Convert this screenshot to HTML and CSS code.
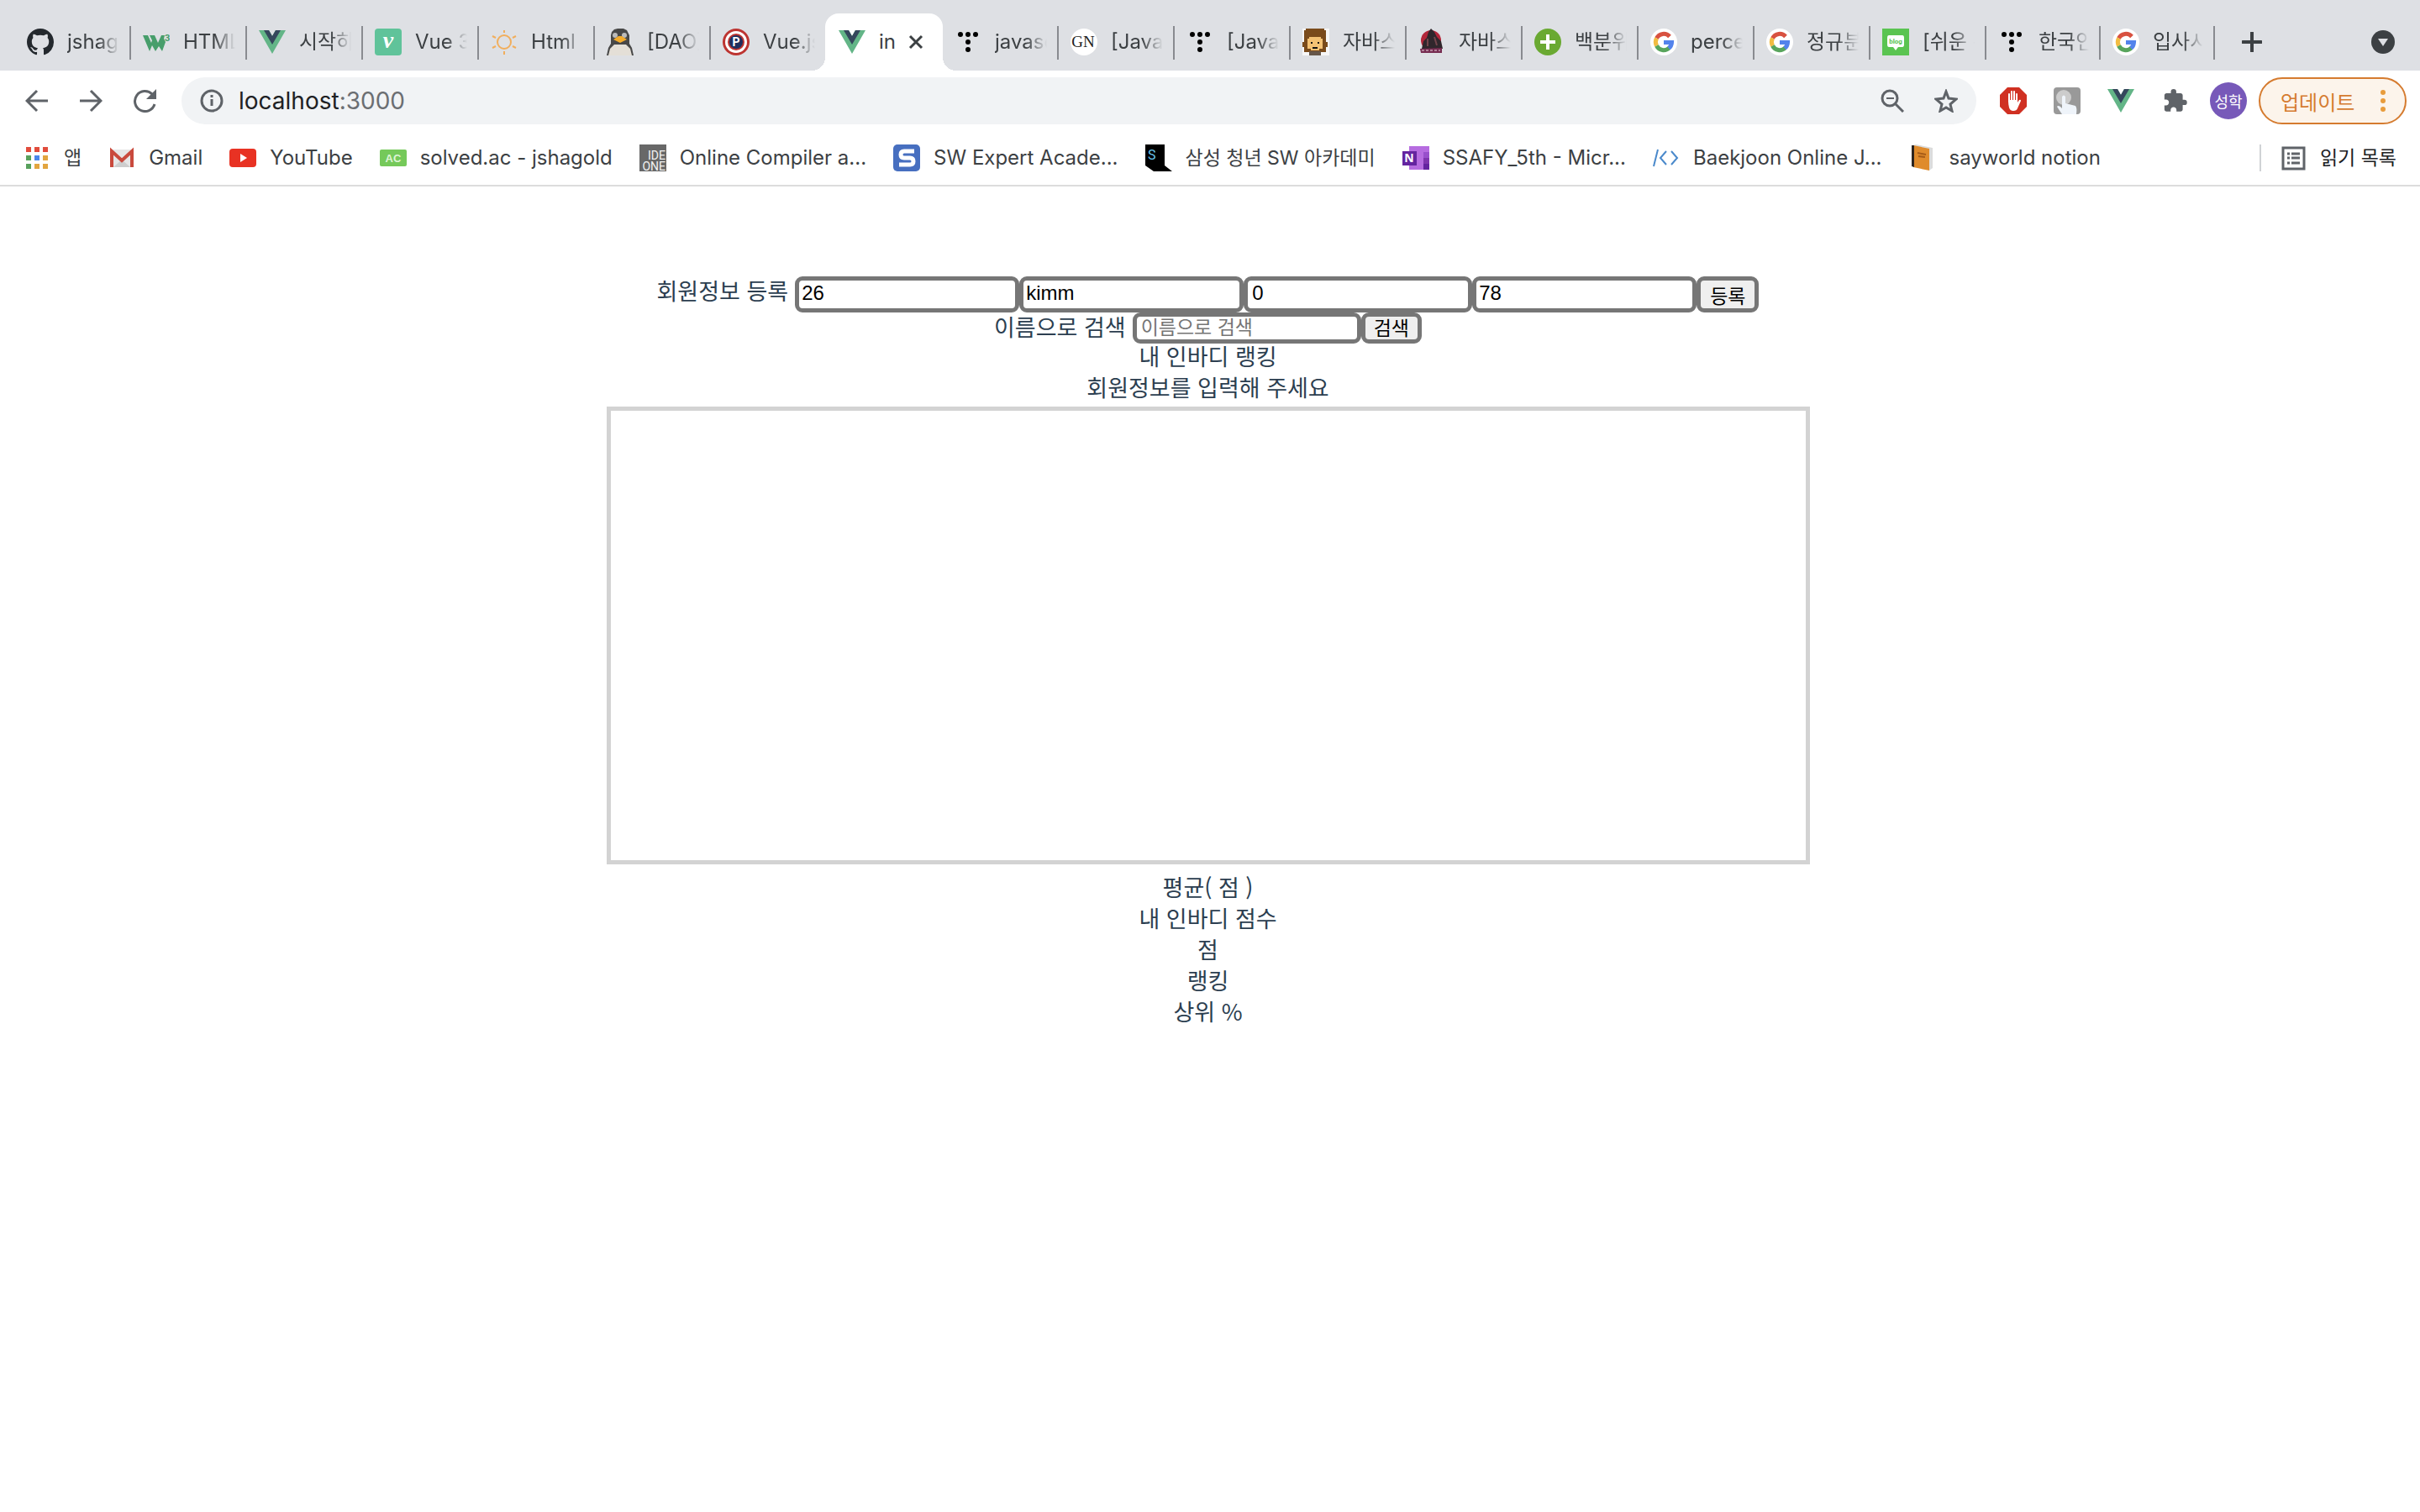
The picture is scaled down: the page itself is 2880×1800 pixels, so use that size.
FILE: index.html
```html
<!DOCTYPE html>
<html lang="ko">
<head>
<meta charset="utf-8">
<title>inbody</title>
<link rel="stylesheet" href="styles.css">
</head>
<body>
<svg class="defs" aria-hidden="true">
  <symbol id="vue" viewBox="0 0 32 32"><path fill="#63b587" d="M0 2h12l4 7 4-7h12L16 30z"/><path fill="#35475c" d="M6 2h6l4 7 4-7h6L16 19z"/></symbol>
  <symbol id="google" viewBox="0 0 32 32"><circle cx="16" cy="16" r="16" fill="#fff"/><g fill="none" stroke-width="5"><path stroke="#d85140" d="M7.500 11.500A9.500 9.500 0 0 1 23 9.500"/><path stroke="#f2bc42" d="M7.500 20.500A9.500 9.500 0 0 1 7.500 11.500"/><path stroke="#58a55c" d="M7.500 20.500A9.500 9.500 0 0 0 22.500 23"/><path stroke="#5383ec" d="M16 16.500h9.500A9.500 9.500 0 0 1 22 23.400"/></g></symbol>
  <symbol id="tistory" viewBox="0 0 32 32"><g fill="#000"><circle cx="7" cy="7" r="3"/><circle cx="16" cy="7" r="3"/><circle cx="25" cy="7" r="3"/><circle cx="16" cy="16" r="3"/><circle cx="16" cy="25" r="3"/></g></symbol>
</svg>

<header class="browser">
  <nav class="tabs" aria-label="탭">
    <a class="tab" href="#"><svg class="icon" viewBox="0 0 16 16"><path fill="#24292e" d="M8 0C3.580 0 0 3.580 0 8c0 3.540 2.290 6.530 5.470 7.590.4.070.55-.17.55-.38v-1.340c-2.230.48-2.700-1.070-2.700-1.070-.36-.92-.89-1.170-.89-1.170-.73-.5.050-.49.050-.49.800.060 1.230.830 1.230.830.710 1.220 1.870.870 2.330.660.070-.52.280-.87.510-1.070-1.780-.2-3.640-.89-3.640-3.950 0-.87.310-1.590.820-2.150-.08-.2-.36-1.020.080-2.120 0 0 .670-.21 2.200.820a7.600 7.600 0 0 1 4 0c1.530-1.040 2.200-.82 2.200-.82.440 1.100.160 1.920.080 2.120.510.560.820 1.270.820 2.150 0 3.070-1.870 3.750-3.650 3.950.290.250.540.730.540 1.480v2.200c0 .210.150.460.550.380A8 8 0 0 0 16 8c0-4.420-3.580-8-8-8z"/></svg><span class="title">jshagold</span></a>
    <a class="tab" href="#"><svg class="icon" viewBox="0 0 32 32"><path fill="#479e6b" d="M0 8h6l4 9 1-3-3-6h6l4 9 4-9h4l-1 4 2 4-4 11-4-6-4 6-4-7-3 7z"/><text class="cube" x="26" y="15">3</text></svg><span class="title">HTML Canvas</span></a>
    <a class="tab" href="#"><svg class="icon"><use href="#vue"/></svg><span class="title">시작하기</span></a>
    <a class="tab" href="#"><svg class="icon" viewBox="0 0 32 32"><rect width="32" height="32" rx="4" fill="#60c39a"/><text class="vee" x="16" y="23" text-anchor="middle">v</text></svg><span class="title">Vue 3 guide</span></a>
    <a class="tab" href="#"><svg class="icon" viewBox="0 0 32 32" fill="none" stroke="#f1ae5c" stroke-width="2"><circle cx="16" cy="16" r="8"/><path d="M16 2v3M16 27v4M2 9l4 2M26 21l4 2M2 23l4-2M26 11l4-2"/></svg><span class="title">Html</span></a>
    <a class="tab" href="#"><svg class="icon" viewBox="0 0 32 32"><path fill="#484848" d="M9 1l4-1h7l4 2 3 6v10l3 5 2 9H0l2-9 3-5V8l1-4z"/><path fill="#e4dfd7" d="M9 19h14l5 5 2 8H2l2-8z"/><circle cx="10" cy="8" r="3" fill="#bbb"/><circle cx="21" cy="8" r="3" fill="#bbb"/><path fill="#f3ab2b" d="M8 13l6-4h4l6 4-8 4z"/></svg><span class="title">[DAO] chart</span></a>
    <a class="tab tab-before" href="#"><svg class="icon" viewBox="0 0 32 32"><circle cx="16" cy="16" r="16" fill="#bd3431"/><circle cx="16" cy="16" r="13" fill="#fff"/><circle cx="16" cy="16" r="10" fill="#bd3431"/><circle cx="16" cy="16" r="8" fill="#1e2f5f"/><text class="pee" x="16" y="21" text-anchor="middle">P</text></svg><span class="title">Vue.js chart</span></a>
    <div class="tab active"><svg class="icon"><use href="#vue"/></svg><span class="title">inbody</span><button class="plain close" aria-label="닫기"><svg viewBox="0 0 18 18" width="18" height="18"><path d="M2 2l14 14M16 2L2 16" stroke="#3c4043" stroke-width="3"/></svg></button></div>
    <a class="tab" href="#"><svg class="icon"><use href="#tistory"/></svg><span class="title">javascript</span></a>
    <a class="tab" href="#"><svg class="icon" viewBox="0 0 32 32"><circle cx="16" cy="16" r="16" fill="#fff"/><text class="monogram" x="15" y="22" text-anchor="middle">GN</text></svg><span class="title">[Javascript]</span></a>
    <a class="tab" href="#"><svg class="icon"><use href="#tistory"/></svg><span class="title">[Javascript]</span></a>
    <a class="tab" href="#"><svg class="icon" viewBox="0 0 32 32"><path fill="#f7f7f7" d="M0 0h32v32H0z"/><path fill="#7a4b1b" d="M4 0h22v2h2v14h2v6h-2v6H2v-6H0v-6h2V2h2z"/><path fill="#f4c274" d="M8 10h14v2h2v12h-4v2H10v-2H6V12h2z"/><path fill="#111" d="M10 16h2v2h-2zM18 16h2v2h-2zM12 22h6v2h-6z"/><path fill="#665649" d="M8 27h14v5H8z"/></svg><span class="title">자바스크립트</span></a>
    <a class="tab" href="#"><svg class="icon" viewBox="0 0 32 32"><circle cx="15" cy="14" r="12" fill="#b3263a"/><path fill="#30272c" d="M12 4l3-4 4 4 3 6 5 5 2 9H4l2-9 4-4z"/><path d="M11 12v9M19 10l3 10" stroke="#74454c" stroke-width="2"/><path fill="#762c50" d="M2 24l26-1v6H3z"/><path d="M4 26h22" stroke="#ead4df" stroke-dasharray="3 2"/></svg><span class="title">자바스크립트</span></a>
    <a class="tab" href="#"><svg class="icon" viewBox="0 0 32 32"><circle cx="16" cy="16" r="16" fill="#6aa932"/><path d="M16 7v18M7 16h18" stroke="#fff" stroke-width="4"/></svg><span class="title">백분위 계산</span></a>
    <a class="tab" href="#"><svg class="icon"><use href="#google"/></svg><span class="title">percentile</span></a>
    <a class="tab" href="#"><svg class="icon"><use href="#google"/></svg><span class="title">정규분포</span></a>
    <a class="tab" href="#"><svg class="icon" viewBox="0 0 32 32"><path fill="#5ac451" d="M0 0h32v32H0z"/><path fill="#fff" d="M8 8h16q2 0 2 3v8q0 3-2 3h-5l-3 4-3-4H8q-2 0-2-3v-8q0-3 2-3z"/><text x="16" y="18" class="blog" text-anchor="middle">blog</text></svg><span class="title">[쉬운 통계]</span></a>
    <a class="tab narrow" href="#"><svg class="icon"><use href="#tistory"/></svg><span class="title">한국인 평균</span></a>
    <a class="tab narrow" href="#"><svg class="icon"><use href="#google"/></svg><span class="title">입사시험</span></a>
    <button class="plain new-tab" aria-label="새 탭"><svg viewBox="0 0 24 24" width="24" height="24"><path d="M12 1v22M1 12h22" stroke="#3c4043" stroke-width="4" stroke-linecap="round"/></svg></button>
    <button class="plain tab-search" aria-label="탭 검색"><svg viewBox="0 0 28 28" width="28" height="28"><circle cx="14" cy="14" r="14" fill="#3c4043"/><path fill="#dee0e4" d="M8 10h12l-6 9z"/></svg></button>
  </nav>

  <div class="toolbar">
    <button class="plain" aria-label="뒤로"><svg class="nav-icon" viewBox="0 0 28 28"><path d="M27 14H3M14 2L2 14l12 12"/></svg></button>
    <button class="plain" aria-label="앞으로"><svg class="nav-icon" viewBox="0 0 28 28"><path d="M1 14h24M14 2l12 12-12 12"/></svg></button>
    <button class="plain reload" aria-label="새로고침"><svg class="nav-icon" viewBox="0 0 28 28"><path d="M26 18A12 12 0 1 1 23 6"/><path d="M28 0v12H16z" class="solid"/></svg></button>
    <div class="omnibox">
      <svg class="nav-icon" viewBox="0 0 28 28"><circle cx="14" cy="14" r="12"/><path d="M14 12v8M14 7v3"/></svg>
      <span class="url">localhost<span class="port">:3000</span></span>
      <button class="plain" aria-label="축소"><svg class="nav-icon" viewBox="0 0 28 28"><circle cx="11" cy="11" r="9"/><path d="M17 17l10 10"/><path d="M7 11h9" stroke-width="2"/></svg></button>
      <button class="plain" aria-label="북마크 추가"><svg class="nav-icon" viewBox="0 0 28 28"><path d="M14 3l3 8 9 1-7 6 2 8-7-4-7 4 2-8-7-6 9-1z"/></svg></button>
    </div>
    <div class="extensions">
      <svg class="icon" viewBox="0 0 32 32"><path fill="#d03022" d="M9 0h14l9 9v14l-9 9H9l-9-9V9z"/><path fill="none" stroke="#fff" stroke-width="2" stroke-linecap="round" d="M11 17V8M14 17V5M17 17V5M20 17V8"/><path fill="#fff" d="M10 15h11v3l2-3q2-1 2 1l-4 9q-1 3-5 3t-5-4q-1-3-1-9z"/></svg>
      <svg class="icon" viewBox="0 0 32 32"><rect width="32" height="32" rx="4" fill="#999"/><circle cx="12" cy="12" r="9" fill="#ccc"/><path fill="#eff4fa" d="M10 11q2-3 4 0v8l12 3q2 2 1 10H10l-6-9q1-2 4 0l2 2z"/></svg>
      <svg class="icon"><use href="#vue"/></svg>
      <svg class="icon" viewBox="-1 0 25 24"><path fill="#5f6368" d="M20.500 11H19V7c0-1.100-.9-2-2-2h-4V3.500a2.500 2.500 0 0 0-5 0V5H4c-1.100 0-2 .9-2 2v3.800h1.500c1.500 0 2.700 1.200 2.700 2.700S5 16.200 3.500 16.200H2V20c0 1.100.9 2 2 2h3.800v-1.500c0-1.500 1.200-2.700 2.700-2.700s2.700 1.200 2.700 2.700V22H17c1.100 0 2-.9 2-2v-4h1.500a2.500 2.500 0 0 0 0-5z"/></svg>
    </div>
    <button class="plain avatar">성학</button>
    <button class="update">업데이트<svg viewBox="0 0 8 28" width="8" height="28" fill="#e89c3c"><circle cx="4" cy="4" r="3"/><circle cx="4" cy="14" r="3"/><circle cx="4" cy="24" r="3"/></svg></button>
  </div>

  <nav class="bookmarks" aria-label="북마크">
    <a class="hangul" href="#"><svg class="icon" viewBox="-3 -3 32 32"><path fill="#e14c3c" d="M0 0h6v6H0zM10 0h6v6h-6zM20 0h6v6h-6z"/><path fill="#58a15c" d="M0 10h6v6H0zM0 20h6v6H0z"/><path fill="#4b86ea" d="M10 10h6v6h-6z"/><path fill="#e2a540" d="M20 10h6v6h-6zM10 20h6v6h-6zM20 20h6v6h-6z"/></svg>앱</a>
    <a href="#"><svg class="icon" viewBox="0 0 32 32"><path fill="#e6e6e6" d="M2 6h28v21H2z"/><path fill="#cdcdcd" d="M6 27l10-9 10 9z"/><path d="M4 27V8l12 11L28 8v19" fill="none" stroke="#c94a3d" stroke-width="4"/></svg>Gmail</a>
    <a href="#"><svg class="icon" viewBox="0 0 32 32"><rect y="5" width="32" height="22" rx="4" fill="#e83223"/><path fill="#fff" d="M13 11l8 5-8 5z"/></svg>YouTube</a>
    <a href="#"><svg class="icon" viewBox="0 0 32 32"><rect y="6" width="32" height="20" rx="2" fill="#75c95a"/><text class="ac" x="16" y="21" text-anchor="middle">AC</text></svg>solved.ac - jshagold</a>
    <a href="#"><svg class="icon" viewBox="0 0 32 32"><path fill="#686868" d="M0 0h32v32H0z"/><text class="ide" x="31" y="18" text-anchor="end">IDE</text><text class="ide" x="31" y="31" text-anchor="end">ONE</text></svg>Online Compiler a...</a>
    <a href="#"><svg class="icon" viewBox="0 0 32 32"><rect width="32" height="32" rx="5" fill="#476fc0"/><path d="M25 8H13q-4 0-4 4t4 4h7q4 0 4 4t-4 4H7" fill="none" stroke="#fff" stroke-width="5"/></svg>SW Expert Acade...</a>
    <a class="hangul" href="#"><svg class="icon" viewBox="0 0 32 32"><path d="M0 0h23v25l9 7H10l-10-7z"/><text class="ess" x="3" y="18">S</text></svg>삼성 청년 SW 아카데미</a>
    <a href="#"><svg class="icon" viewBox="0 0 32 32"><path fill="#b66ce0" d="M8 2h24v28H8z"/><path fill="#9850cb" d="M25 9h7v7h-7z"/><path fill="#7e35ae" d="M25 16h7v7h-7z"/><path fill="#6424a0" d="M25 23h7v7h-7zM0 8h17v17H0z"/><text class="note" x="8" y="21" text-anchor="middle">N</text></svg>SSAFY_5th - Micr...</a>
    <a href="#"><svg class="icon" viewBox="0 0 32 32"><path d="M6 6L1 26M16 8l-7 8 7 8M22 8l7 8-7 8" fill="none" stroke="#4a89cb" stroke-width="2"/></svg>Baekjoon Online J...</a>
    <a href="#"><svg class="icon" viewBox="0 0 32 32"><path fill="#dcdcdc" d="M5 1l3-1 20 4v24l-4 3z"/><path fill="#df8b2c" d="M5 1l19 4v26L5 27z"/><path fill="#2d2520" d="M3 1l3 0v26l-3-1z"/><path d="M10 10l10 2M11 14l8 1" stroke="#a65c19" stroke-width="2"/></svg>sayworld notion</a>
    <a class="hangul reading" href="#"><svg class="icon" viewBox="0 0 32 32" fill="none" stroke="#5f6368" stroke-width="3"><path d="M4 4h25v25H4zM9 11h3M14 11h10M9 16h3M14 16h10M9 22h3M14 22h10"/></svg>읽기 목록</a>
  </nav>
</header>

<main class="app">
  <form class="row register">
    <label for="age">회원정보 등록</label>
    <input id="age" value="26"><input aria-label="이름" value="kimm"><input class="wide" aria-label="성별" value="0"><input aria-label="점수" value="78"><button type="button">등록</button>
  </form>
  <form class="row search">
    <label for="name">이름으로 검색</label>
    <input id="name" class="wide" placeholder="이름으로 검색"><button type="button">검색</button>
  </form>
  <p>내 인바디 랭킹</p>
  <p>회원정보를 입력해 주세요</p>
  <canvas class="chart"></canvas>
  <p>평균( 점 )</p>
  <p>내 인바디 점수</p>
  <p>점</p>
  <p>랭킹</p>
  <p>상위 %</p>
</main>
</body>
</html>
```
FILE: styles.css
```css
* { box-sizing: border-box; }
body { margin: 0; background: #fff; font-family: Inter, "Noto Sans CJK KR", sans-serif; font-size: 24px; color: #3c4043; }
a { color: inherit; text-decoration: none; }
.defs { position: absolute; width: 0; height: 0; }
.icon { width: 32px; height: 32px; flex: none; }
.nav-icon { width: 28px; height: 28px; fill: none; stroke: #5f6368; stroke-width: 3px; flex: none; }
.nav-icon .solid { fill: #5f6368; stroke: none; }
.plain { display: flex; align-items: center; justify-content: center; border: 0; padding: 0; background: none; font: inherit; flex: none; }

/* Tab strip */
.tabs { display: flex; align-items: flex-end; height: 84px; padding: 0 18px; background: #dee0e4; }
.tab { position: relative; display: flex; align-items: center; gap: 16px; flex: none; width: 138px; height: 68px; padding: 0 14px; }
.tab.narrow { width: 136px; }
.tab:not(.active)::after { content: ""; position: absolute; right: 0; top: 15px; width: 2px; height: 40px; background: #898b90; }
.tab.tab-before::after { display: none; }
.title { flex: 1; overflow: hidden; white-space: nowrap; line-height: 32px; mask-image: linear-gradient(to right, #000 60%, transparent); }
.tab.active { width: 140px; margin-left: -2px; padding: 0 23px 0 16px; background: #fff; border-radius: 16px 16px 0 0; }
.active::before, .active::after { content: ""; position: absolute; bottom: 0; width: 16px; height: 16px; }
.active::before { right: 100%; background: radial-gradient(circle at 0 0, transparent 16px, #fff 16px); }
.active::after { left: 100%; background: radial-gradient(circle at 100% 0, transparent 16px, #fff 16px); }
.active .title { mask-image: none; }
.close { width: 18px; }
.new-tab { width: 88px; height: 68px; }
.tab-search { width: 32px; height: 68px; margin-left: auto; margin-right: 10px; }

/* Lettering inside favicons */
.cube { font: bold 11px Roboto, sans-serif; fill: #479e6b; }
.vee { font: italic bold 28px "Liberation Serif", serif; fill: #fff; }
.pee { font: bold 14px Roboto, sans-serif; fill: #fff; }
.monogram { font: 19px "Liberation Serif", serif; fill: #222; }
.blog { font: bold 8px Roboto, sans-serif; fill: #5ac451; }
.ac { font: bold 13px "Liberation Sans", sans-serif; fill: #dff5d7; }
.ide { font: 14px Roboto, sans-serif; fill: #f2f2f2; }
.ess { font: 16px Roboto, sans-serif; fill: #68c5ed; }
.note { font: bold 14px "Open Sans", sans-serif; fill: #fff; }

/* Address bar */
.toolbar { display: flex; align-items: center; height: 72px; padding: 0 16px 0 30px; }
.toolbar > .plain { margin-right: 36px; }
.toolbar > .reload { margin-right: 30px; }
.omnibox { display: flex; align-items: center; gap: 36px; flex: 1; height: 56px; padding: 0 22px; border-radius: 28px; background: #f1f3f5; }
.url { flex: 1; margin-left: -18px; font-size: 28px; color: #202124; }
.port { color: #6b6e72; }
.extensions { display: flex; gap: 32px; margin: 0 26px 0 28px; }
.toolbar > .avatar { width: 44px; height: 44px; margin-right: 14px; border-radius: 50%; background: #7759b9; color: #fff; font-size: 18px; }
.update { display: flex; align-items: center; justify-content: space-between; width: 176px; height: 56px; padding: 0 22px 0 24px; border: 2px solid #d57b2f; border-radius: 28px; background: #fcf4eb; color: #d57b2f; font: 24px "Noto Sans CJK KR", sans-serif; }

/* Bookmarks bar */
.bookmarks { display: flex; align-items: center; gap: 32px; height: 66px; padding: 0 28px; border-bottom: 2px solid #dcdcdc; }
.bookmarks a { display: flex; align-items: center; gap: 16px; white-space: nowrap; line-height: 32px; }
.bookmarks .hangul { font-size: 23px; }
.bookmarks .reading { margin-left: auto; padding-left: 22px; border-left: 2px solid #d0d2d5; color: #202124; }

/* Page */
.app { display: flex; flex-direction: column; align-items: center; padding: 107px 5px 0 0; font-family: "Noto Sans CJK KR", sans-serif; font-size: 27px; line-height: 30px; color: #2c3e50; }
.app p { margin: 0; height: 37px; }
.row { display: flex; }
.row label { margin-right: 8px; line-height: 33px; }
.row input, .row button { border: 5px solid #767676; border-radius: 9px; font: 24px "Liberation Sans", "Noto Sans CJK KR", sans-serif; color: #000; }
.row input { width: 267px; padding: 0 3px; background: #fff; }
.row input.wide { width: 272px; padding: 0 5px; }
.row input::placeholder { color: #757575; }
.row button { background: #efefef; padding: 0 10px; font-size: 23px; }
.register input, .register button { height: 43px; }
.row.register input { padding-bottom: 4px; }
.row.register button { padding: 0 11px 8px; }
.search input, .search button { height: 37px; line-height: 26px; }
.search input { font-size: 23px; }
.chart { width: 1432px; max-width: 100%; height: 545px; margin: 1px 0 12px; border: 5px solid #d3d3d3; }
```
